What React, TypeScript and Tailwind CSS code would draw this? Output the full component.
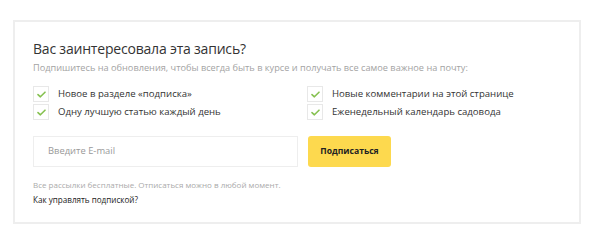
import React from "react";

function Check() {
  return (
    <span className="w-[16px] h-[16px] border border-[#e8e8e8] bg-white flex items-center justify-center shrink-0">
      <svg width="9" height="7" viewBox="0 0 9 7">
        <path d="M1 3.6 L3.4 5.8 L8 1.2" fill="none" stroke="#86c150" strokeWidth="1.6" strokeLinecap="round" strokeLinejoin="round" />
      </svg>
    </span>
  );
}

function Item({ text }: { text: string }) {
  return (
    <div className="flex items-center gap-[9px] h-[18px]">
      <Check />
      <span className="text-[9.6px] text-[#333]">{text}</span>
    </div>
  );
}

export default function App() {
  return (
    <div className="w-[600px] h-[240px] bg-white pt-[20px] pl-[13px]" style={{ fontFamily: '"Open Sans", "Noto Sans", sans-serif' }}>
      <div className="w-[568px] h-[204px] border-2 border-[#eeeeee] pl-[18px] pt-[16px]">
        <div className="text-[14px] leading-[22px] text-[#333] tracking-[-0.2px]">Вас заинтересовала эта запись?</div>
        <div className="text-[9.2px] leading-[14px] text-[#a3a3a3] mt-[1px]">Подпишитесь на обновления, чтобы всегда быть в курсе и получать все самое важное на почту:</div>
        <div className="flex mt-[10px]">
          <div className="w-[274px] flex flex-col">
            <Item text="Новое в разделе «подписка»" />
            <Item text="Одну лучшую статью каждый день" />
          </div>
          <div className="flex flex-col">
            <Item text="Новые комментарии на этой странице" />
            <Item text="Еженедельный календарь садовода" />
          </div>
        </div>
        <div className="flex mt-[15px] gap-[10px]">
          <div className="w-[265px] h-[31px] border border-[#eeeeee] flex items-center pl-[14px] text-[9.4px] text-[#999]">Введите E-mail</div>
          <button className="w-[83px] h-[31px] rounded-[3px] bg-[#fdd94e] text-[8.6px] font-bold text-[#222]">Подписаться</button>
        </div>
        <div className="text-[8px] text-[#aaa] mt-[11px] leading-[14px]">Все рассылки бесплатные. Отписаться можно в любой момент.</div>
        <div className="text-[8.1px] text-[#222] leading-[14px] mt-[1px]">Как управлять подпиской?</div>
      </div>
    </div>
  );
}
